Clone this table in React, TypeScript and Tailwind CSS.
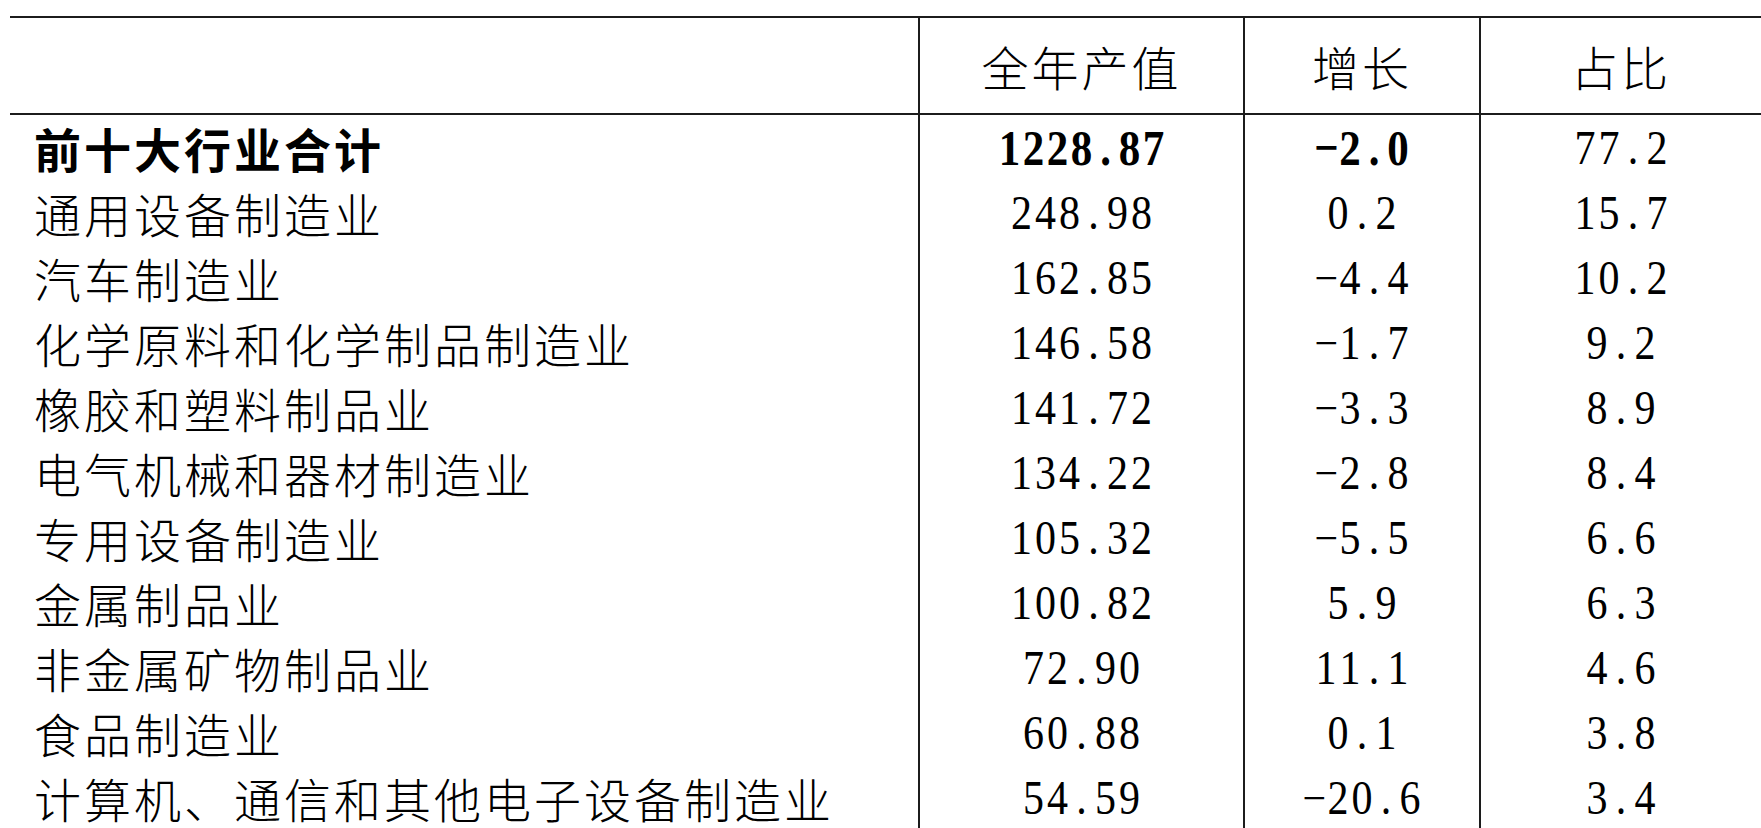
import React from "react"

interface Row {
  name: string
  value: string
  growth: string
  share: string
  bold?: boolean
}

const rows: Row[] = [
  { name: "前十大行业合计", value: "1228.87", growth: "−2.0", share: "77.2", bold: true },
  { name: "通用设备制造业", value: "248.98", growth: "0.2", share: "15.7" },
  { name: "汽车制造业", value: "162.85", growth: "−4.4", share: "10.2" },
  { name: "化学原料和化学制品制造业", value: "146.58", growth: "−1.7", share: "9.2" },
  { name: "橡胶和塑料制品业", value: "141.72", growth: "−3.3", share: "8.9" },
  { name: "电气机械和器材制造业", value: "134.22", growth: "−2.8", share: "8.4" },
  { name: "专用设备制造业", value: "105.32", growth: "−5.5", share: "6.6" },
  { name: "金属制品业", value: "100.82", growth: "5.9", share: "6.3" },
  { name: "非金属矿物制品业", value: "72.90", growth: "11.1", share: "4.6" },
  { name: "食品制造业", value: "60.88", growth: "0.1", share: "3.8" },
  { name: "计算机、通信和其他电子设备制造业", value: "54.59", growth: "−20.6", share: "3.4" },
]

// digits sit in half-width slots and are drawn tall and narrow, like the source document's font
function Num({ text, bold }: { text: string; bold?: boolean }) {
  return (
    <span
      className={`inline-flex font-['Liberation_Serif',serif] leading-none ${
        bold ? "text-[43px] font-bold scale-y-[1.2]" : "text-[42px] scale-y-[1.14]"
      }`}
    >
      {text.split("").map((ch, i) => (
        <span key={i} className="inline-block w-[24px] text-center">
          {ch}
        </span>
      ))}
    </span>
  )
}

const cjk = "font-['Noto_Sans_CJK_SC',sans-serif] text-[47px] leading-none tracking-[3px]"
const cell = "flex items-center justify-center border-l-2 border-[#1c1c1c]"

export default function App() {
  return (
    <div className="h-screen bg-white pt-[16px] pl-[10px] text-black overflow-hidden">
      <div className="border-t-2 border-[#1c1c1c]">
        <div className="grid h-[97px] grid-cols-[908px_325px_236px_1fr] border-b-2 border-[#1c1c1c]">
          <div />
          <div className={cell}>
            <span className={`${cjk} font-light`}>全年产值</span>
          </div>
          <div className={cell}>
            <span className={`${cjk} font-light`}>增长</span>
          </div>
          <div className={cell}>
            <span className={`${cjk} font-light`}>占比</span>
          </div>
        </div>

        {rows.map((r) => (
          <div key={r.name} className="grid h-[65px] grid-cols-[908px_325px_236px_1fr]">
            <div className="flex items-center pl-[24px]">
              <span className={`${cjk} ${r.bold ? "font-bold" : "font-light"}`}>{r.name}</span>
            </div>
            <div className={cell}>
              <Num text={r.value} bold={r.bold} />
            </div>
            <div className={cell}>
              <Num text={r.growth} bold={r.bold} />
            </div>
            <div className={cell}>
              <Num text={r.share} />
            </div>
          </div>
        ))}
      </div>
    </div>
  )
}
